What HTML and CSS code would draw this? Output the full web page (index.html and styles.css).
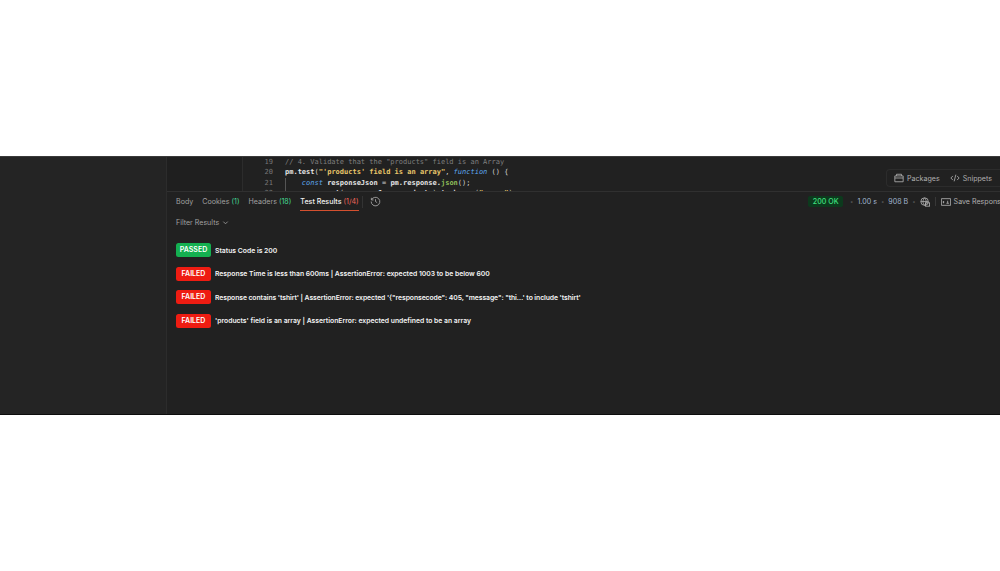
FILE: index.html
```html
<!DOCTYPE html>
<html lang="en">
<head>
<meta charset="utf-8">
<title>Test Results</title>
<link rel="stylesheet" href="styles.css">
</head>
<body>
<div class="app">
  <aside class="sidebar"></aside>
  <main class="main">
    <section class="editor">
      <div class="editor-left"></div>
      <div class="gutter">
        <div class="ln">19</div>
        <div class="ln">20</div>
        <div class="ln">21</div>
        <div class="ln">22</div>
      </div>
      <div class="code">
        <div class="cl c-comment">// 4. Validate that the "products" field is an Array</div>
        <div class="cl"><span class="c-fn">pm.test</span>(<span class="c-str">"'products' field is an array"</span>, <span class="c-kw">function</span> () {</div>
        <div class="cl cl-in">    <span class="c-kw">const</span> <span class="c-fn">responseJson</span> = <span class="c-fn">pm.response.</span><span class="c-call">json</span>();</div>
        <div class="cl cl-in">    <span class="c-fn">pm.expect</span>(<span class="c-fn">responseJson.products</span>).<span class="c-fn">to.be.an</span>(<span class="c-str">"array"</span>);</div>
      </div>
      <div class="tools">
        <span class="tool">
          <svg class="ico" viewBox="0 0 12 12"><path d="M1 3.500h10v7H1zM1 6h10M3 3.500V1.500h6v2"/></svg>Packages
        </span>
        <span class="tool">
          <svg class="ico" viewBox="0 0 12 12"><path d="M3.500 3.500 1 6l2.500 2.500M8.500 3.500 11 6 8.500 8.500M7 2 5 10"/></svg>Snippets
        </span>
      </div>
    </section>
    <nav class="tabs">
      <span class="tab">Body</span>
      <span class="tab">Cookies <b class="n-g">(1)</b></span>
      <span class="tab">Headers <b class="n-g">(18)</b></span>
      <span class="tab tab-on">Test Results <b class="n-r">(1/4)</b></span>
      <span class="tab-sep"></span>
      <svg class="hist" viewBox="0 0 12 12"><path d="M1.700 4.200A4.700 4.700 0 1 1 1.300 6M1.500 2v2.300h2.300M6 3.500V6l1.800 1.200"/></svg>
      <div class="stats">
        <span class="ok">200 OK</span>
        <span class="dot">•</span>
        <span class="stat">1.00 s</span>
        <span class="dot">•</span>
        <span class="stat">908 B</span>
        <span class="dot">•</span>
        <svg class="ico globe" viewBox="0 0 12 12"><circle cx="5.500" cy="5.500" r="4.500"/><path d="M1 5.500h9M5.500 1c-2.500 3-2.500 6 0 9M5.500 1c2.500 3 2.500 6 0 9"/><rect class="lock" x="6.500" y="7" width="5" height="4"/></svg>
        <span class="stat-sep"></span>
        <span class="save">
          <svg class="ico save-ico" viewBox="0 0 12 12"><path d="M.5 2h11v8H.5zM3 5v2.500M2 6h2M6.500 7.500h3M8 4.500v3"/></svg>Save Response
        </span>
      </div>
    </nav>
    <div class="filter">Filter Results
      <svg class="chev" viewBox="0 0 8 8"><path d="M1.500 3 4 5.500 6.500 3"/></svg>
    </div>
    <ul class="results">
      <li class="row"><span class="badge pass">PASSED</span><span>Status Code is 200</span></li>
      <li class="row"><span class="badge fail">FAILED</span><span>Response Time is less than 600ms | AssertionError: expected 1003 to be below 600</span></li>
      <li class="row"><span class="badge fail">FAILED</span><span class="tight">Response contains 'tshirt' | AssertionError: expected '{"responsecode": 405, "message": "thi…' to include 'tshirt'</span></li>
      <li class="row"><span class="badge fail">FAILED</span><span>'products' field is an array | AssertionError: expected undefined to be an array</span></li>
    </ul>
  </main>
</div>
</body>
</html>
```
FILE: styles.css
```css
html, body { margin: 0; padding: 0; background: #fff; overflow: hidden; }
body { padding-top: 156px; height: 415px; box-sizing: border-box; font-family: Inter, "Liberation Sans", sans-serif; }
.app {
  display: flex; height: 259px; background: #212121;
  border-top: 1px solid #3a3a3a; border-bottom: 1px solid #0c0c0c; box-sizing: border-box;
  overflow: hidden;
}
.sidebar { width: 166px; flex: none; background: #242424; border-right: 1px solid #2c2c2c; }
.main { flex: 1; min-width: 0; overflow: hidden; }

.editor { display: flex; height: 35px; border-bottom: 1px solid #303030; box-sizing: border-box; overflow: hidden; position: relative; background: #212121; }
.editor-left { width: 75px; flex: none; background: #1f1f1f; border-right: 1px solid #2c2c2c; }
.gutter { width: 30px; flex: none; margin: -0.400px 12px 0 0; text-align: right; font: 7px/10.500px "DejaVu Sans Mono", monospace; color: #777; }
.ln { height: 10.500px; }
.code { margin-top: -0.400px; font: 7px/10.500px "DejaVu Sans Mono", monospace; color: #d0d0d0; }
.cl { height: 10.500px; white-space: pre; }
.cl-in { box-shadow: inset 1px 0 0 #555; }
.c-comment { color: #7f7f7f; }
.c-fn { color: #e4e4e4; font-weight: 700; }
.c-str { color: #e8c66a; font-weight: 700; }
.c-kw { color: #5ea8ef; font-style: italic; }
.c-call { color: #8fbf5a; font-weight: 700; }
.tools {
  position: absolute; right: 0; top: 12px; height: 18px; width: 114px; padding-left: 7px;
  display: flex; align-items: center; gap: 10px; box-sizing: border-box;
  font-size: 7.100px; color: #b0b0b0; border: 1px solid #2c2c2c; border-right: 0; border-radius: 4px 0 0 4px;
}
.tool { display: flex; align-items: center; gap: 3px; white-space: nowrap; }
.ico { width: 10px; height: 10px; fill: none; stroke: #b0b0b0; stroke-width: 1; flex: none; }

.tabs { display: flex; align-items: center; height: 19px; padding-left: 9px; font-size: 7.100px; color: #a0a0a0; white-space: nowrap; }
.tab { height: 19px; line-height: 19px; margin-right: 9px; box-sizing: border-box; }
.tab b { font-weight: 400; }
.n-g { color: #45dc96; }
.n-r { color: #f2665a; }
.tab-on { color: #f0f0f0; font-weight: 500; border-bottom: 1px solid #d4502f; margin-right: 3px; }
.tab-sep { width: 1px; height: 12px; background: #333; margin-right: 7px; }
.hist { width: 11px; height: 11px; fill: none; stroke: #a0a0a0; stroke-width: 1; }
.stats { margin-left: auto; display: flex; align-items: center; gap: 4px; margin-right: -5px; color: #9fb0c8; }
.ok { background: #0c3a1d; color: #3fe07f; padding: 0 4.500px; height: 11px; line-height: 11px; border-radius: 2px; margin-right: 3px; font-weight: 500; }
.dot { color: #555; font-size: 6px; }
.stat { color: #a0b4ce; }
.stat-sep { width: 1px; height: 9px; background: #383838; margin: 0 1px; }
.save { display: flex; align-items: center; gap: 3px; color: #b0b0b0; }

.filter { height: 22px; display: flex; align-items: center; gap: 3px; padding-left: 9px; font-size: 7.100px; color: #a0a0a0; }
.chev { width: 7px; height: 7px; fill: none; stroke: #9a9a9a; stroke-width: 1; }

.results { list-style: none; margin: 10px 0 0; padding: 0 0 0 9px; display: flex; flex-direction: column; gap: 9.500px; }
.row { display: flex; align-items: center; gap: 4px; height: 14px; font-size: 6.800px; font-weight: 600; color: #f4f4f4; white-space: nowrap; }
.tight { letter-spacing: -0.070px; }
.badge { width: 35px; height: 14px; line-height: 14px; text-align: center; border-radius: 2.500px; color: #fff; font-size: 7px; font-weight: 600; flex: none; }
.pass { background: #14b050; }
.fail { background: #ee1c12; }
```
